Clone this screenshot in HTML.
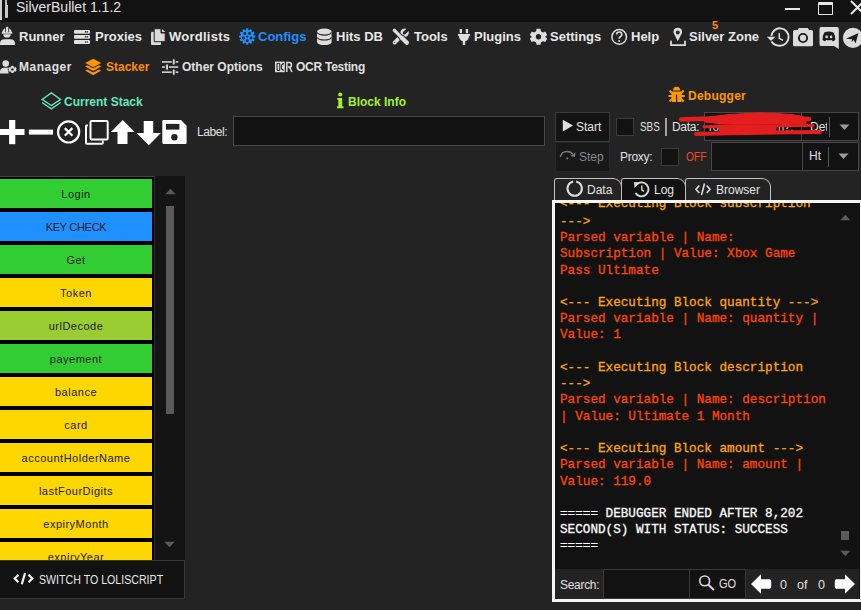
<!DOCTYPE html>
<html><head><meta charset="utf-8">
<style>
*{margin:0;padding:0;box-sizing:border-box}
html,body{width:861px;height:610px;overflow:hidden;background:#232323;font-family:"Liberation Sans",sans-serif;color:#e6e6e6}
.a{position:absolute}
.t{position:absolute;white-space:nowrap;line-height:1}
.mb{font-weight:bold;font-size:13px;color:#e8e8e8}
.sb{font-weight:bold;font-size:12px;color:#e0e0e0}
svg{position:absolute;overflow:visible}
.blk{position:absolute;left:0;width:152px;height:29px;color:#202020;font-size:11px;letter-spacing:0.5px;text-align:center;line-height:30px}
.inp{position:absolute;background:#121212;border:1px solid #474747}
.log div{position:absolute;left:0;white-space:pre;font-family:"Liberation Mono",monospace;font-size:12.67px;line-height:16px;-webkit-text-stroke:0.3px}
.o{color:#ffa500}.r{color:#ff4500}.w{color:#fafafa}
</style></head><body>
<!-- ===== title bar ===== -->
<div class="a" style="left:0;top:0;width:861px;height:22px;background:#121212"></div>
<div class="a" style="left:0;top:0;width:2px;height:20px;background:#cfcfcf"></div>
<div class="a" style="left:5px;top:0;width:2px;height:5px;background:#bdbdbd"></div>
<div class="a" style="left:5px;top:5px;width:3px;height:13px;background:#c8c8c8;border-radius:0 0 1px 1px"></div>
<div class="t" style="left:16px;top:0px;font-size:14px;color:#e0e0e0">SilverBullet 1.1.2</div>
<div class="a" style="left:785px;top:8px;width:15px;height:1.5px;background:#e6e6e6"></div>
<div class="a" style="left:818px;top:2px;width:15px;height:13px;border:1.5px solid #e6e6e6;border-top-width:3px;border-radius:1px"></div>
<svg style="left:850px;top:0" width="20" height="16"><path d="M1 1 L14 14 M14 1 L1 14" stroke="#e6e6e6" stroke-width="2"/></svg>

<!-- ===== menu row 1 ===== -->
<svg style="left:0;top:26px" width="16" height="20" fill="#e0e0e0">
 <rect x="6" y="0.8" width="2.3" height="6" rx="0.8"/><path d="M2.2 7 Q2.4 3.4 5.2 2.3 L5.2 7 Z"/><path d="M9.1 2.3 Q11.7 3.4 11.9 7 L9.1 7 Z"/>
 <rect x="1.6" y="6.2" width="10.8" height="1.5" rx="0.5"/>
 <path d="M3.2 8.2 L10.8 8.2 Q10.6 11.6 7 11.6 Q3.4 11.6 3.2 8.2 Z"/>
 <path d="M0 19 L0 17 Q0.3 13.2 4.5 13.2 L10.5 13.2 Q14.7 13.2 15 17 L15 19 Z"/>
</svg>
<div class="t mb" style="left:19px;top:30px">Runner</div>
<svg style="left:74px;top:30px" width="16" height="14">
 <rect x="0" y="0" width="16" height="3.8" rx="1" fill="#e0e0e0"/>
 <rect x="0" y="5" width="16" height="3.8" rx="1" fill="#e0e0e0"/>
 <rect x="0" y="10.1" width="16" height="3.8" rx="1" fill="#e0e0e0"/>
 <g fill="#333"><circle cx="11.5" cy="1.9" r="0.8"/><circle cx="13.3" cy="1.9" r="0.8"/><circle cx="11.5" cy="6.9" r="0.8"/><circle cx="13.3" cy="6.9" r="0.8"/><circle cx="11.5" cy="12" r="0.8"/><circle cx="13.3" cy="12" r="0.8"/></g>
</svg>
<div class="t mb" style="left:95px;top:30px">Proxies</div>
<svg style="left:150px;top:28px" width="16" height="18">
 <rect x="1" y="3.7" width="10" height="13.3" rx="1" fill="#dcdcdc"/>
 <path d="M4.2 0.7 L11 0.7 L11 5 L15.2 5 L15.2 13.7 L4.2 13.7 Z" fill="#dcdcdc" stroke="#232323" stroke-width="1"/>
 <path d="M12 1 L15.2 4.1 L12 4.1 Z" fill="#dcdcdc"/>
</svg>
<div class="t mb" style="left:169px;top:30px;letter-spacing:0.25px">Wordlists</div>
<svg style="left:239px;top:28px" width="17" height="17"><g transform="translate(8.2,8.5)"><path d="M-1.03 -6.52 L-0.96 -8.14 L0.96 -8.14 L1.03 -6.52 L2.37 -6.16 L3.24 -7.53 L4.91 -6.57 L4.15 -5.13 L5.13 -4.15 L6.57 -4.91 L7.53 -3.24 L6.16 -2.37 L6.52 -1.03 L8.14 -0.96 L8.14 0.96 L6.52 1.03 L6.16 2.37 L7.53 3.24 L6.57 4.91 L5.13 4.15 L4.15 5.13 L4.91 6.57 L3.24 7.53 L2.37 6.16 L1.03 6.52 L0.96 8.14 L-0.96 8.14 L-1.03 6.52 L-2.37 6.16 L-3.24 7.53 L-4.91 6.57 L-4.15 5.13 L-5.13 4.15 L-6.57 4.91 L-7.53 3.24 L-6.16 2.37 L-6.52 1.03 L-8.14 0.96 L-8.14 -0.96 L-6.52 -1.03 L-6.16 -2.37 L-7.53 -3.24 L-6.57 -4.91 L-5.13 -4.15 L-4.15 -5.13 L-4.91 -6.57 L-3.24 -7.53 L-2.37 -6.16 Z" fill="#1e90ff"/><g fill="#232323"><circle cx="0.00" cy="4.20" r="1.45"/><circle cx="-3.80" cy="1.44" r="1.45"/><circle cx="-2.35" cy="-3.04" r="1.45"/><circle cx="2.35" cy="-3.04" r="1.45"/><circle cx="3.80" cy="1.44" r="1.45"/><circle cx="0" cy="0.2" r="1.1"/></g></g></svg>
<div class="t mb" style="left:258px;top:30px;color:#1e90ff">Configs</div>
<svg style="left:317px;top:28px" width="15" height="18">
 <path d="M0 3.8 A7.3 3.2 0 0 1 14.6 3.8 L14.6 13.9 A7.3 3.2 0 0 1 0 13.9 Z" fill="#dedede"/>
 <path d="M0.2 4.6 A7.3 3.3 0 0 0 14.4 4.6 M0.2 9.5 A7.3 3.3 0 0 0 14.4 9.5" fill="none" stroke="#232323" stroke-width="1.1"/>
</svg>
<div class="t mb" style="left:336px;top:30px">Hits DB</div>
<svg style="left:392px;top:28px" width="18" height="18" stroke-linecap="round">
 <path d="M10.6 6.6 L2.6 14.6" stroke="#dedede" stroke-width="3.8"/>
 <circle cx="12.6" cy="4.8" r="4.2" fill="#dedede"/>
 <path d="M12.4 4.9 L16.5 0.8" stroke="#232323" stroke-width="3.2"/>
 <circle cx="2.8" cy="14.4" r="0.7" fill="#555"/>
 <path d="M2.2 2.2 L8.4 8.4" stroke="#232323" stroke-width="5"/>
 <path d="M9.8 9.8 L14.8 14.8" stroke="#232323" stroke-width="6.2"/>
 <path d="M2.2 2.2 L8.4 8.4" stroke="#dedede" stroke-width="3.2"/>
 <path d="M9.8 9.8 L14.8 14.8" stroke="#dedede" stroke-width="4.4"/>
 <path d="M7.6 7.6 L10.4 10.4" stroke="#dedede" stroke-width="2"/>
</svg>
<div class="t mb" style="left:414px;top:30px">Tools</div>
<svg style="left:457px;top:28px" width="14" height="18" fill="#dedede">
 <rect x="2.7" y="1" width="2.3" height="4.2" rx="0.6"/>
 <rect x="8.8" y="1" width="2.3" height="4.2" rx="0.6"/>
 <path d="M0.9 6 L13.1 6 L13.1 7.8 L12.3 7.8 Q11.5 12.5 8.6 13.3 L8.2 13.3 L8.2 17 L5.8 17 L5.8 13.3 L5.4 13.3 Q2.5 12.5 1.7 7.8 L0.9 7.8 Z"/>
</svg>
<div class="t mb" style="left:474px;top:30px">Plugins</div>
<svg style="left:530px;top:28px" width="17" height="17">
 <g transform="translate(8.5,8.8)">
 <path d="M-1.9 -8 L1.9 -8 L2.4 -5.6 L4.5 -4.4 L6.8 -5.2 L8.7 -1.9 L6.9 -0.3 L6.9 0.3 L8.7 1.9 L6.8 5.2 L4.5 4.4 L2.4 5.6 L1.9 8 L-1.9 8 L-2.4 5.6 L-4.5 4.4 L-6.8 5.2 L-8.7 1.9 L-6.9 0.3 L-6.9 -0.3 L-8.7 -1.9 L-6.8 -5.2 L-4.5 -4.4 L-2.4 -5.6 Z" fill="#dedede"/>
 <circle r="2.7" fill="#232323"/>
 </g>
</svg>
<div class="t mb" style="left:550px;top:30px">Settings</div>
<svg style="left:611px;top:29px" width="17" height="17">
 <circle cx="8.2" cy="7.9" r="7.3" fill="none" stroke="#dedede" stroke-width="1.5"/>
 <path d="M5.6 5.6 Q5.6 3 8.2 3 Q10.8 3 10.8 5.4 Q10.8 6.9 9.2 7.7 Q8.2 8.3 8.2 9.8" fill="none" stroke="#dedede" stroke-width="1.6"/>
 <circle cx="8.2" cy="12" r="1" fill="#dedede"/>
</svg>
<div class="t mb" style="left:631px;top:30px">Help</div>
<svg style="left:670px;top:27px" width="17" height="20">
 <path d="M7.8 14.2 L4.4 7.5 Q3.3 5.6 3.5 4.4 Q3.9 0.7 7.8 0.7 Q11.7 0.7 12.1 4.4 Q12.3 5.6 11.2 7.5 Z" fill="#dedede"/>
 <circle cx="7.8" cy="5.5" r="1.9" fill="#232323"/>
 <path d="M1 13.8 L1 18.2 L15 18.2 L15 13.8" fill="none" stroke="#dedede" stroke-width="1.8"/>
</svg>
<div class="t mb" style="left:689px;top:30px">Silver Zone</div>
<div class="t" style="left:712px;top:20px;font-size:11px;font-weight:bold;color:#ff8c00">5</div>
<svg style="left:766px;top:27px" width="24" height="20">
 <path d="M5.5 14.5 Q8 18.5 13.8 18.7 A8.7 8.7 0 1 0 5.3 8.8" fill="none" stroke="#e0e0e0" stroke-width="1.9"/>
 <path d="M0.8 9.8 L9.3 9.8 L5 14 Z" fill="#e0e0e0"/>
 <path d="M13.3 6.2 L13.3 11.3 L17 13.3" fill="none" stroke="#e0e0e0" stroke-width="1.5"/>
</svg>
<svg style="left:793px;top:27px" width="21" height="20">
 <path d="M1.5 3 L4.7 3 L5.8 1 L14.9 1 L16 3 L18.5 3 Q20 3 20 4.5 L20 17.7 Q20 19.2 18.5 19.2 L1.5 19.2 Q0 19.2 0 17.7 L0 4.5 Q0 3 1.5 3 Z" fill="#dcdcdc"/>
 <circle cx="10" cy="11" r="4.1" fill="none" stroke="#1a1a1a" stroke-width="1.9"/>
</svg>
<svg style="left:819px;top:26px" width="20" height="24">
 <path d="M2 1 L17.8 1 Q19.8 1 19.8 3 L19.8 23 L15 19.9 L2 19.9 Q0.5 19.9 0.5 18 L0.5 3 Q0.5 1 2 1 Z" fill="#dcdcdc"/>
 <path d="M5.3 6.6 Q9.9 4.6 14.5 6.6 Q16.5 10 16.3 13.9 Q15.1 14.9 13.6 15.2 L12.7 13.9 Q9.9 14.6 7.1 13.9 L6.2 15.2 Q4.7 14.9 3.5 13.9 Q3.3 10 5.3 6.6 Z" fill="#1c1c1c"/>
 <circle cx="7.7" cy="10.9" r="1.3" fill="#dcdcdc"/><circle cx="12.1" cy="10.9" r="1.3" fill="#dcdcdc"/>
</svg>
<svg style="left:842px;top:27px" width="22" height="22">
 <circle cx="11" cy="10.9" r="10.1" fill="#dcdcdc"/>
 <path d="M4 11.8 L16.5 6 L13.5 16.5 L11.8 13 L9.5 15 L10 12.2 Z" fill="#1c1c1c"/>
</svg>

<!-- ===== menu row 2 ===== -->
<svg style="left:0;top:59px" width="17" height="16" fill="#dcdcdc">
 <circle cx="5.7" cy="4.6" r="3.3"/>
 <path d="M0 14.5 L0 12.5 Q0.4 8.8 4 8.8 L8 8.8 Q8.5 8.8 9 9 L8.5 14.5 Z"/>
 <g transform="translate(12.4,10.4)"><circle r="4.6" fill="#232323"/><path d="M-1 -3.6 L1 -3.6 L1.3 -2.5 L2.4 -1.9 L3.4 -2.3 L4.2 -0.6 L3.4 0 L4.2 0.6 L3.4 2.3 L2.4 1.9 L1.3 2.5 L1 3.6 L-1 3.6 L-1.3 2.5 L-2.4 1.9 L-3.4 2.3 L-4.2 0.6 L-3.4 0 L-4.2 -0.6 L-3.4 -2.3 L-2.4 -1.9 L-1.3 -2.5 Z"/><circle r="1.2" fill="#232323"/></g>
</svg>
<div class="t sb" style="left:19px;top:61px;letter-spacing:0.5px">Manager</div>
<svg style="left:85px;top:58px" width="17" height="18" fill="#ff9500">
 <path d="M8.2 0.8 L16.2 5 L8.2 9.2 L0.2 5 Z"/>
 <path d="M0.2 8.4 L2.4 7.2 L8.2 10.3 L14 7.2 L16.2 8.4 L8.2 12.9 Z"/>
 <path d="M0.2 12.6 L2.4 11.4 L8.2 14.5 L14 11.4 L16.2 12.6 L8.2 17.2 Z"/>
</svg>
<div class="t sb" style="left:106px;top:61px;color:#ff8c00">Stacker</div>
<svg style="left:161px;top:59px" width="18" height="17" fill="#dcdcdc">
 <rect x="1" y="2.2" width="16.3" height="1.5"/><rect x="1" y="7.3" width="16.3" height="1.5"/><rect x="1" y="12.4" width="16.3" height="1.5"/>
 <g stroke="#232323" stroke-width="1"><rect x="11.3" y="-0.2" width="2.9" height="6.3" rx="1.2"/><rect x="4.6" y="4.9" width="2.9" height="6.3" rx="1.2"/><rect x="11.3" y="10" width="2.9" height="6.3" rx="1.2"/></g>
</svg>
<div class="t sb" style="left:182px;top:61px">Other Options</div>
<svg style="left:275px;top:61px" width="18" height="12">
 <rect x="0" y="0.6" width="9.8" height="10.6" fill="#dcdcdc"/>
 <rect x="2" y="2.3" width="2.8" height="7.2" rx="1.3" fill="none" stroke="#232323" stroke-width="1.1"/>
 <path d="M9 2.6 Q6.4 2.6 6.4 5.9 Q6.4 9.2 9 9.2" fill="none" stroke="#232323" stroke-width="1.1"/>
 <path d="M11.8 11 L11.8 1.6 L14.3 1.6 Q16.5 1.6 16.5 3.9 Q16.5 6.1 14.3 6.1 L12.8 6.1 M14.5 6.1 L17 11" fill="none" stroke="#dcdcdc" stroke-width="1.5"/>
</svg>
<div class="t sb" style="left:296px;top:61px;letter-spacing:-0.25px">OCR Testing</div>

<!-- ===== section headers ===== -->
<svg style="left:41px;top:92px" width="21" height="18" fill="none" stroke="#64e8be" stroke-width="1.3">
 <path d="M10.4 0.9 L19.6 7.4 L10.4 13.5 L1.1 7.4 Z"/>
 <path d="M1.1 10.5 L10.4 16.9 L19.6 10.5"/>
</svg>
<div class="t sb" style="left:64px;top:96px;color:#64e8be">Current Stack</div>
<svg style="left:336px;top:92px" width="9" height="17" fill="#a6ee2e">
 <circle cx="4.2" cy="2.5" r="2.1"/>
 <path d="M1.2 6 L6.2 6 L6.2 14 L7.5 14.6 L7.5 16.2 L1 16.2 L1 14.6 L2.3 14 L2.3 8 L1.2 7.6 Z"/>
</svg>
<div class="t sb" style="left:348px;top:96px;color:#a2f22f">Block Info</div>
<svg style="left:668px;top:86px" width="18" height="18" fill="#ff9800">
 <path d="M5 4.5 Q5 0.7 8.6 0.7 Q12.2 0.7 12.2 4.5 Z"/>
 <path d="M3.6 5.6 L13.6 5.6 Q14 11 13.4 16 L9.2 16 L9.2 8.6 L8 8.6 L8 16 L3.8 16 Q3.2 11 3.6 5.6 Z"/>
 <path d="M1.5 4.5 L4.5 7.5 M15.7 4.5 L12.7 7.5 M0.5 10 L4 10 M16.7 10 L13.2 10 M1.5 15.5 L4.5 12.5 M15.7 15.5 L12.7 12.5" stroke="#ff9800" stroke-width="1.8"/>
</svg>
<div class="t sb" style="left:688px;top:90px;color:#ff9800;letter-spacing:0.25px">Debugger</div>

<!-- ===== toolbar ===== -->
<svg style="left:0;top:118px" width="190" height="30" fill="#fff">
 <rect x="0" y="11" width="24.5" height="6"/><rect x="9.1" y="2" width="6.2" height="24.2"/>
 <rect x="28.9" y="11.6" width="24.1" height="5"/>
 <circle cx="68.6" cy="13.9" r="10.6" fill="none" stroke="#fff" stroke-width="2.2"/>
 <path d="M64.8 10.1 L72.4 17.7 M72.4 10.1 L64.8 17.7" stroke="#fff" stroke-width="2.2"/>
 <path d="M88 7.5 L86.5 7.5 Q86 7.5 86 8 L86 24.7 Q86 25.7 87 25.7 L101.8 25.7 Q102.8 25.7 102.8 24.7 L102.8 22.5" fill="none" stroke="#fff" stroke-width="2"/>
 <rect x="90.5" y="3" width="17.2" height="18.5" rx="1.2" fill="none" stroke="#fff" stroke-width="2"/>
 <path d="M122.8 2.1 L134.7 14 L127.5 14 L127.5 25.9 L117.5 25.9 L117.5 14 L110.9 14 Z"/>
 <path d="M143.7 3 L153.2 3 L153.2 15 L160.9 15 L148.8 27.3 L136.6 15 L143.7 15 Z"/>
 <path d="M163.5 2.1 L181 2.1 L186.6 7.7 L186.6 24.7 Q186.6 25.9 185.4 25.9 L163.5 25.9 Q162.3 25.9 162.3 24.7 L162.3 3.3 Q162.3 2.1 163.5 2.1 Z"/>
 <rect x="166" y="5.9" width="13.4" height="5.7" fill="#232323"/>
 <circle cx="174.4" cy="19.2" r="3.2" fill="#232323"/>
</svg>

<!-- label -->
<div class="t" style="left:197px;top:126px;font-size:12px;color:#e0e0e0;letter-spacing:-0.4px">Label:</div>
<div class="inp" style="left:233px;top:116px;width:312px;height:30px"></div>

<!-- ===== debugger controls ===== -->
<div class="inp" style="left:555px;top:112px;width:55px;height:30px;background:#141414;border-color:#3a3a3a"></div>
<svg style="left:562px;top:119px" width="12" height="14"><path d="M0.8 0.7 L11 6.6 L0.8 12.6 Z" fill="#e0e0e0"/></svg>
<div class="t" style="left:576px;top:121px;font-size:12px;color:#e6e6e6">Start</div>
<div class="inp" style="left:555px;top:142px;width:55px;height:30px;background:#181818;border-color:#262626"></div>
<svg style="left:559px;top:150px" width="18" height="12">
 <path d="M1.3 7.2 Q2.5 1.5 8 1.5 Q12 1.5 14 4.5" fill="none" stroke="#7a7a7a" stroke-width="1.3"/>
 <path d="M16.5 2.2 L16 7 L11.5 6.3 Z" fill="#7a7a7a"/>
 <circle cx="8.3" cy="8.3" r="1.1" fill="#7a7a7a"/>
</svg>
<div class="t" style="left:579px;top:151px;font-size:12px;color:#868686">Step</div>
<div class="inp" style="left:616px;top:118px;width:18px;height:18px;border-color:#3c3c3c"></div>
<div class="t" style="left:640px;top:121px;font-size:12px;color:#e0e0e0;transform:scaleX(0.82);transform-origin:0 0">SBS</div>
<div class="a" style="left:665px;top:118px;width:2px;height:18px;background:#a0a0a0"></div>
<div class="t" style="left:672px;top:121px;font-size:12px;color:#e0e0e0;letter-spacing:-0.3px">Data:</div>
<div class="inp" style="left:704px;top:112px;width:98px;height:29px"></div>
<div class="inp" style="left:801px;top:112px;width:58px;height:29px"></div>
<div class="t" style="left:810px;top:121px;font-size:12px;color:#e0e0e0;width:17px;overflow:hidden">Det</div>
<div class="a" style="left:829px;top:117px;width:1px;height:20px;background:#555"></div>
<svg style="left:839px;top:124px" width="12" height="8"><path d="M0.5 0.5 L10.5 0.5 L5.5 6 Z" fill="#9a9a9a"/></svg>
<div class="t" style="left:620px;top:151px;font-size:12px;color:#e0e0e0;letter-spacing:-0.3px">Proxy:</div>
<div class="inp" style="left:661px;top:148px;width:18px;height:18px;border-color:#3c3c3c"></div>
<div class="t" style="left:686px;top:151px;font-size:12px;color:#f04a2a;transform:scaleX(0.86);transform-origin:0 0">OFF</div>
<div class="inp" style="left:711px;top:142px;width:92px;height:29px"></div>
<div class="inp" style="left:802px;top:142px;width:57px;height:29px"></div>
<div class="t" style="left:809px;top:150px;font-size:12px;color:#e0e0e0">Ht</div>
<div class="a" style="left:828px;top:147px;width:1px;height:20px;background:#555"></div>
<svg style="left:838px;top:153px" width="12" height="8"><path d="M0.5 0.5 L10.5 0.5 L5.5 6 Z" fill="#9a9a9a"/></svg>
<!-- red scribble -->
<div class="t" style="left:709px;top:122px;font-size:11px;color:#d8d8d8">rom..</div>
<div class="t" style="left:778px;top:122px;font-size:11px;color:#d8d8d8">rl?,</div>
<svg style="left:0;top:0" width="861" height="150" fill="#e41e1e" stroke="#e41e1e" stroke-linecap="round">
 <path d="M681 119.5 Q745 117 809 119" stroke-width="4.5" fill="none"/>
 <path d="M705 118 Q722 114 760 113 Q795 113.5 806 117.5 L806 123.5 L718 123.5 L705 122 Z" stroke-width="1"/>
 <path d="M704 126.8 Q760 125.5 813 125.5" stroke-width="3" fill="none"/>
 <path d="M720 125 Q750 124 776 125.5 L776 131 L720 131.5 Z" stroke-width="1"/>
 <path d="M696 134 Q760 132.5 820 132" stroke-width="4" fill="none"/>
</svg>

<!-- ===== block list ===== -->
<div class="a" style="left:0;top:176px;width:155px;height:384px;background:#000;border-top:1px solid #454545;border-right:1px solid #2e2e2e"></div>
<div class="a" style="left:155px;top:176px;width:30px;height:384px;background:#141414"></div>
<svg style="left:164.5px;top:187.5px" width="12" height="8"><path d="M0.3 6.3 L5.5 0.8 L10.7 6.3 Z" fill="#5a5a5a"/></svg>
<svg style="left:164px;top:541px" width="12" height="8"><path d="M0.3 0.7 L10.7 0.7 L5.5 6.2 Z" fill="#5a5a5a"/></svg>
<div class="a" style="left:166px;top:206px;width:8px;height:208px;background:#5a5a5a"></div>
<div class="blk" style="top:179px;background:#32cd32">Login</div>
<div class="blk" style="top:212px;background:#1e90ff;letter-spacing:-0.3px">KEY CHECK</div>
<div class="blk" style="top:245px;background:#32cd32">Get</div>
<div class="blk" style="top:278px;background:#ffd700">Token</div>
<div class="blk" style="top:311px;background:#9acd32">urlDecode</div>
<div class="blk" style="top:344px;background:#32cd32">payement</div>
<div class="blk" style="top:377px;background:#ffd700">balance</div>
<div class="blk" style="top:410px;background:#ffd700">card</div>
<div class="blk" style="top:443px;background:#ffd700">accountHolderName</div>
<div class="blk" style="top:476px;background:#ffd700">lastFourDigits</div>
<div class="blk" style="top:509px;background:#ffd700">expiryMonth</div>
<div class="a" style="left:0;top:542px;width:152px;height:18px;overflow:hidden"><div class="blk" style="top:0;background:#ffd700">expiryYear</div></div>

<!-- switch button -->
<div class="a" style="left:0;top:560px;width:185px;height:39px;background:#121212;border:1px solid #383838;border-left:none"></div>
<svg style="left:13px;top:572px" width="22" height="14" fill="none" stroke="#f4f4f4" stroke-width="2.2">
 <path d="M5.5 2.8 L1.8 6.5 L5.5 10.2 M15.5 2.8 L19.2 6.5 L15.5 10.2 M12 1.2 L8.8 12.3"/>
</svg>
<div class="t" style="left:39px;top:574px;font-size:12px;color:#e6e6e6;transform:scaleX(0.885);transform-origin:0 0">SWITCH TO LOLISCRIPT</div>

<!-- ===== tabs ===== -->
<div class="a" style="left:685px;top:178px;width:86px;height:23px;background:#232323;border:1px solid #c0c0c0;border-bottom:none;border-radius:3px 9px 0 0"></div>
<div class="a" style="left:554px;top:178px;width:68px;height:23px;background:#232323;border:1px solid #c0c0c0;border-bottom:none;border-radius:3px 9px 0 0"></div>
<div class="a" style="left:621px;top:178px;width:65px;height:23px;background:#111;border:1px solid #c0c0c0;border-bottom:none;border-radius:3px 9px 0 0"></div>
<svg style="left:566px;top:180px" width="18" height="18">
 <path d="M10.2 1.6 A7.2 7.2 0 1 1 7.2 1.6" fill="none" stroke="#dcdcdc" stroke-width="2"/>
</svg>
<div class="t" style="left:587px;top:184px;font-size:12px;color:#e6e6e6">Data</div>
<svg style="left:632px;top:180px" width="18" height="18">
 <path d="M4.5 4.5 A7 7 0 1 1 3.5 13" fill="none" stroke="#dcdcdc" stroke-width="1.9"/>
 <path d="M2 2 L8 2.5 L2.5 8 Z" fill="#dcdcdc"/>
 <path d="M9.8 5.5 L9.8 9.8 L12 11.5" fill="none" stroke="#dcdcdc" stroke-width="1.4"/>
</svg>
<div class="t" style="left:654px;top:184px;font-size:12px;color:#e6e6e6">Log</div>
<svg style="left:695px;top:183px" width="17" height="13" fill="none" stroke="#dcdcdc" stroke-width="1.6">
 <path d="M4.3 2.5 L1 6.3 L4.3 10 M11.7 2.5 L15 6.3 L11.7 10 M9.5 0.5 L6.5 12"/>
</svg>
<div class="t" style="left:716px;top:184px;font-size:12px;color:#e6e6e6">Browser</div>

<!-- ===== log panel ===== -->
<div class="a" style="left:552px;top:200px;width:311px;height:402px;border:3px solid #f5f5f5;background:#121212"></div>
<div class="a log" style="left:560px;top:203px;width:280px;height:366px;overflow:hidden">
<div class="o" style="top:-7px">&lt;--- Executing Block subscription</div>
<div class="o" style="top:10.8px">---&gt;</div>
<div class="r" style="top:27.0px">Parsed variable | Name:</div>
<div class="r" style="top:43.2px">Subscription | Value: Xbox Game</div>
<div class="r" style="top:59.5px">Pass Ultimate</div>
<div class="o" style="top:91.9px">&lt;--- Executing Block quantity ---&gt;</div>
<div class="r" style="top:108.2px">Parsed variable | Name: quantity |</div>
<div class="r" style="top:124.4px">Value: 1</div>
<div class="o" style="top:156.8px">&lt;--- Executing Block description</div>
<div class="o" style="top:173.1px">---&gt;</div>
<div class="r" style="top:189.3px">Parsed variable | Name: description</div>
<div class="r" style="top:205.5px">| Value: Ultimate 1 Month</div>
<div class="o" style="top:238.0px">&lt;--- Executing Block amount ---&gt;</div>
<div class="r" style="top:254.2px">Parsed variable | Name: amount |</div>
<div class="r" style="top:270.5px">Value: 119.0</div>
<div class="w" style="top:302.9px">===== DEBUGGER ENDED AFTER 8,202</div>
<div class="w" style="top:319.1px">SECOND(S) WITH STATUS: SUCCESS</div>
<div class="w" style="top:335.4px">=====</div>
</div>
<svg style="left:840px;top:214px" width="12" height="8"><path d="M0.3 6.3 L5.3 0.8 L10.3 6.3 Z" fill="#5a5a5a"/></svg>
<div class="a" style="left:841px;top:531px;width:8px;height:9px;background:#5a5a5a"></div>
<svg style="left:840px;top:550px" width="12" height="8"><path d="M0.3 0.7 L10.3 0.7 L5.3 6.2 Z" fill="#5a5a5a"/></svg>

<!-- ===== search bar ===== -->
<div class="a" style="left:555px;top:569px;width:304px;height:30px;background:#232323"></div>
<div class="t" style="left:560px;top:579px;font-size:12px;color:#e0e0e0;letter-spacing:-0.3px">Search:</div>
<div class="inp" style="left:603px;top:569px;width:87px;height:30px;border-color:#3a3a3a"></div>
<div class="inp" style="left:689px;top:569px;width:57px;height:30px;border-color:#3a3a3a"></div>
<svg style="left:698px;top:574px" width="18" height="18">
 <circle cx="6.7" cy="6.9" r="4.9" fill="none" stroke="#dcdcdc" stroke-width="1.6"/>
 <path d="M10.2 10.5 L15.8 16" stroke="#dcdcdc" stroke-width="2"/>
</svg>
<div class="t" style="left:719px;top:578px;font-size:12.5px;color:#e0e0e0;transform:scaleX(0.88);transform-origin:0 0">GO</div>
<svg style="left:750px;top:573px" width="23" height="22" fill="#fff">
 <path d="M1 11 L11 1.3 L11 6.2 L19.5 6.2 Q21.2 6.2 21.2 8 L21.2 14 Q21.2 15.7 19.5 15.7 L11 15.7 L11 20.7 Z"/>
</svg>
<div class="t" style="left:780px;top:579px;font-size:12.5px;color:#e0e0e0">0</div>
<div class="t" style="left:797px;top:579px;font-size:12.5px;color:#e0e0e0">of</div>
<div class="t" style="left:818px;top:579px;font-size:12.5px;color:#e0e0e0">0</div>
<svg style="left:834px;top:573px" width="23" height="22" fill="#fff">
 <path d="M21 11 L11 1.3 L11 6.2 L2.5 6.2 Q0.8 6.2 0.8 8 L0.8 14 Q0.8 15.7 2.5 15.7 L11 15.7 L11 20.7 Z"/>
</svg>
</body></html>
